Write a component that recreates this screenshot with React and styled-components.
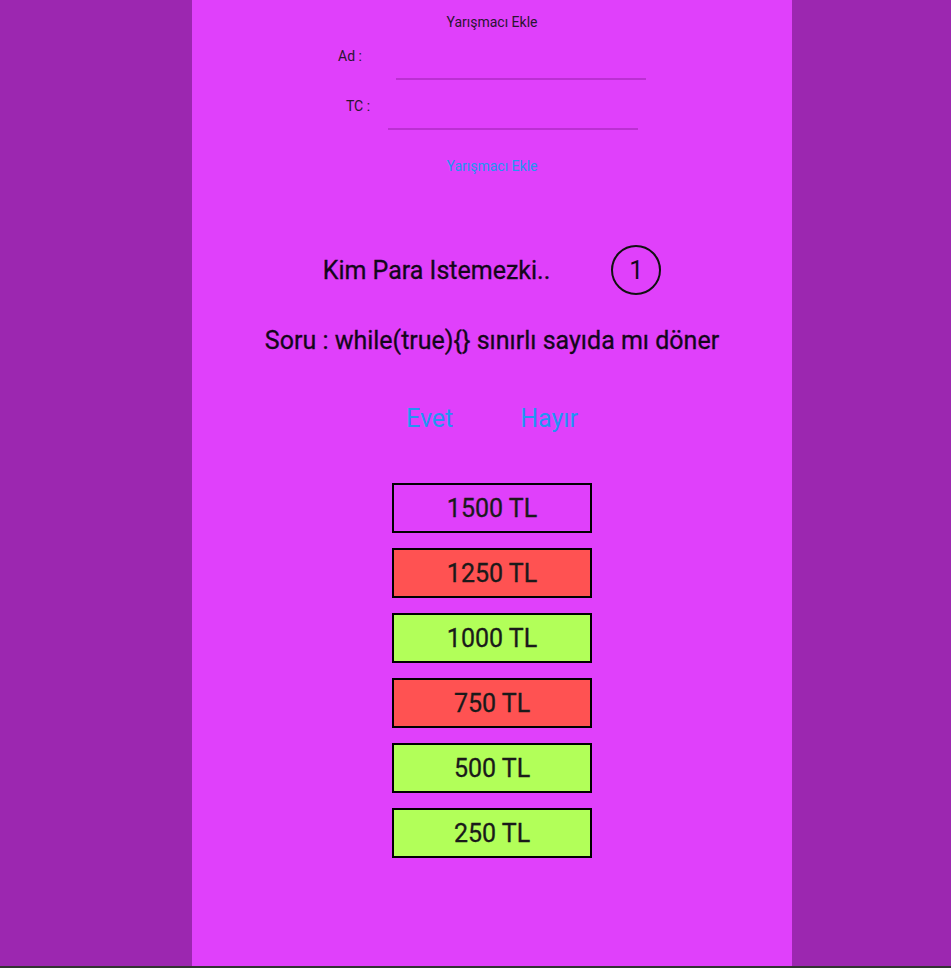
import React from 'react'
import styled, {createGlobalStyle} from 'styled-components'

const outerPurple = '#9c27b0'
const innerPurple = '#e040fb'
const linkBlue = '#2196f3'

const GlobalStyle = createGlobalStyle`
  html, body {
    margin: 0;
    padding: 0;
    background: #333;
  }
  body {
    font-family: Roboto, 'Noto Sans', sans-serif;
    color: #14061a;
  }
`

const Page = styled.div`
  height: 966px;
  background: ${outerPurple};
  display: flex;
  padding-left: 192px;
`
const Panel = styled.main`
  width: 600px;
  background: ${innerPurple};
  display: flex;
  flex-direction: column;
  align-items: center;
`
const Form = styled.section`
  display: flex;
  flex-direction: column;
  align-items: center;
  padding-top: 14px;
`
const FormTitle = styled.div`
  font-size: 14px;
  line-height: 16px;
  color: #2a1530;
`
const Field = styled.div`
  display: flex;
  align-items: flex-start;
  gap: ${p => p.gap}px;
  margin-top: ${p => p.top}px;
`
const Label = styled.label`
  font-size: 14px;
  line-height: 16px;
  color: #2a1530;
`
const Input = styled.input`
  width: 250px;
  height: 20px;
  margin-top: ${p => p.drop}px;
  border: none;
  border-bottom: 2px solid rgba(80, 0, 90, 0.25);
  background: transparent;
  outline: none;
  padding: 0;
`
const AddButton = styled.button`
  margin-top: 28px;
  border: none;
  background: transparent;
  color: ${linkBlue};
  font-family: Roboto, sans-serif;
  font-size: 14px;
  line-height: 16px;
  padding: 0;
`
const Header = styled.div`
  margin-top: 71px;
  display: flex;
  align-items: center;
  gap: 61px;
`
const Title = styled.h1`
  margin: 0;
  font-size: 25px;
  font-weight: 400;
  line-height: 29px;
  -webkit-text-stroke: 0.3px currentColor;
`
const Badge = styled.div`
  width: 46px;
  height: 46px;
  border: 2px solid #111;
  border-radius: 50%;
  display: flex;
  align-items: center;
  justify-content: center;
  font-size: 25px;
`
const Question = styled.p`
  margin: 31px 0 0;
  font-size: 25px;
  line-height: 29px;
  -webkit-text-stroke: 0.3px currentColor;
`
const Answers = styled.div`
  margin-top: 49px;
  display: flex;
  gap: 67px;
`
const Answer = styled.button`
  border: none;
  background: transparent;
  color: ${linkBlue};
  font-family: Roboto, sans-serif;
  font-size: 25px;
  line-height: 29px;
  padding: 0;
`
const Ladder = styled.ol`
  list-style: none;
  margin: 50px 0 0;
  padding: 0;
  display: flex;
  flex-direction: column;
  gap: 15px;
`
const Step = styled.li`
  width: 196px;
  height: 46px;
  border: 2px solid #000;
  background: ${p => p.tone};
  display: flex;
  align-items: center;
  justify-content: center;
  font-size: 25px;
  color: #1a1a1a;
  -webkit-text-stroke: 0.3px currentColor;
`

const tones = {
  idle: innerPurple,
  wrong: '#ff5252',
  right: '#b2ff59',
}

const steps = [
  {amount: '1500 TL', tone: 'idle'},
  {amount: '1250 TL', tone: 'wrong'},
  {amount: '1000 TL', tone: 'right'},
  {amount: '750 TL', tone: 'wrong'},
  {amount: '500 TL', tone: 'right'},
  {amount: '250 TL', tone: 'right'},
]

const App = () => (
  <React.Fragment>
    <GlobalStyle />
    <Page>
      <Panel>
        <Form>
          <FormTitle>Yarışmacı Ekle</FormTitle>
          <Field gap={34} top={18}>
            <Label>Ad :</Label>
            <Input drop={10} />
          </Field>
          <Field gap={18} top={18}>
            <Label>TC :</Label>
            <Input drop={10} />
          </Field>
          <AddButton>Yarışmacı Ekle</AddButton>
        </Form>
        <Header>
          <Title>Kim Para Istemezki..</Title>
          <Badge>1</Badge>
        </Header>
        <Question>Soru : while(true){'{}'} sınırlı sayıda mı döner</Question>
        <Answers>
          <Answer>Evet</Answer>
          <Answer>Hayır</Answer>
        </Answers>
        <Ladder>
          {steps.map(s => (
            <Step key={s.amount} tone={tones[s.tone]}>{s.amount}</Step>
          ))}
        </Ladder>
      </Panel>
    </Page>
  </React.Fragment>
)

export default App
